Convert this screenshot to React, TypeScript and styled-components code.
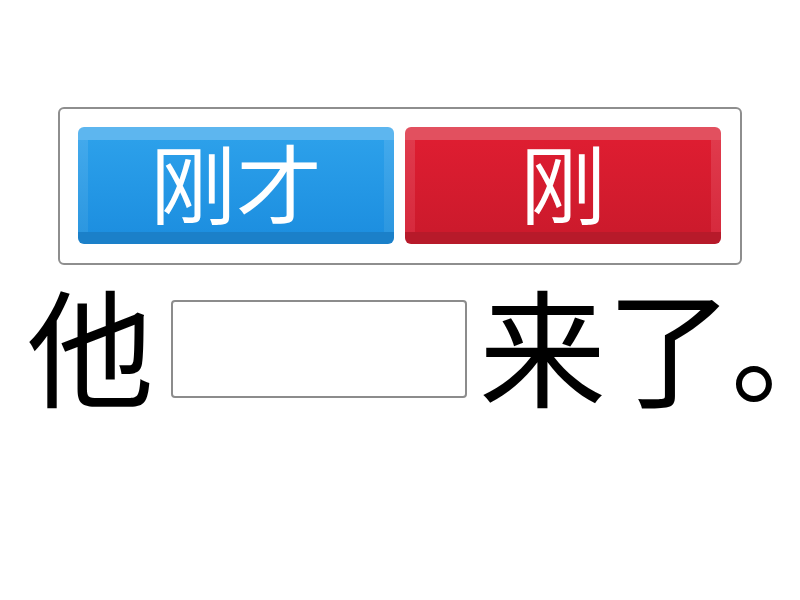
import React from "react";
import styled, { createGlobalStyle } from "styled-components";

const GlobalStyle = createGlobalStyle`
  html, body {
    margin: 0;
    padding: 0;
    background: #fff;
  }
  body {
    font-family: "Noto Sans CJK SC", "Noto Sans", sans-serif;
  }
`;

const Page = styled.div`
  width: 800px;
  height: 600px;
  overflow: hidden;
  display: flex;
  flex-direction: column;
  padding-top: 107px;
  box-sizing: border-box;
`;

const ChoiceCard = styled.div`
  margin-left: 58px;
  width: 684px;
  height: 158px;
  box-sizing: border-box;
  border: 2px solid #8e8e8e;
  border-radius: 6px;
  padding: 18px 19px 18px 18px;
  display: grid;
  grid-template-columns: 1fr 1fr;
  gap: 11px;
`;

type Tone = "blue" | "red";

const palette = {
  blue: {
    top: "#5db6ef",
    side: "#42a9ec",
    sideLow: "#2c97e0",
    bottom: "#1b80c9",
    faceTop: "#2ca0ea",
    faceBottom: "#1d8fe0",
  },
  red: {
    top: "#e2505f",
    side: "#e03a4c",
    sideLow: "#d62a3d",
    bottom: "#b71a2a",
    faceTop: "#de1d31",
    faceBottom: "#cc1a2c",
  },
};

const ChoiceButton = styled.button<{ $tone: Tone }>`
  all: unset;
  box-sizing: border-box;
  height: 117px;
  border-radius: 6px;
  padding: 13px 10px 12px 10px;
  cursor: pointer;
  display: flex;
  background: ${({ $tone }) => {
    const c = palette[$tone];
    return `linear-gradient(to bottom, ${c.top} 0, ${c.top} 13px, ${c.side} 13px, ${c.sideLow} calc(100% - 12px), ${c.bottom} calc(100% - 12px), ${c.bottom} 100%)`;
  }};
`;

const ButtonFace = styled.span<{ $tone: Tone }>`
  flex: 1;
  display: flex;
  align-items: center;
  justify-content: center;
  color: #fff;
  font-size: 86px;
  line-height: 1;
  padding-bottom: 10px;
  font-family: "Noto Sans CJK SC", "Noto Sans", sans-serif;
  background: ${({ $tone }) =>
    `linear-gradient(to bottom, ${palette[$tone].faceTop}, ${palette[$tone].faceBottom})`};
`;

const Sentence = styled.div`
  margin-top: 19px;
  padding-left: 27px;
  height: 130px;
  display: flex;
  align-items: center;
  white-space: nowrap;
`;

const Word = styled.span`
  font-size: 127px;
  line-height: 127px;
  margin-bottom: 12px;
  color: #000;
  font-family: "Noto Sans CJK SC", "Noto Sans", sans-serif;
`;

const Period = styled(Word)`
  margin-left: -2px;
  font-size: 118px;
  letter-spacing: -76px;
`;

const Blank = styled.div`
  width: 296px;
  height: 98px;
  box-sizing: border-box;
  border: 2px solid #8c8c8c;
  border-radius: 4px;
  margin: 0 12px 0 17px;
  flex-shrink: 0;
`;

export default function App() {
  return (
    <>
      <GlobalStyle />
      <Page>
        <ChoiceCard>
          <ChoiceButton $tone="blue">
            <ButtonFace $tone="blue">刚才</ButtonFace>
          </ChoiceButton>
          <ChoiceButton $tone="red">
            <ButtonFace $tone="red">刚</ButtonFace>
          </ChoiceButton>
        </ChoiceCard>
        <Sentence>
          <Word>他</Word>
          <Blank />
          <Word>来了</Word>
          <Period>。</Period>
        </Sentence>
      </Page>
    </>
  );
}
